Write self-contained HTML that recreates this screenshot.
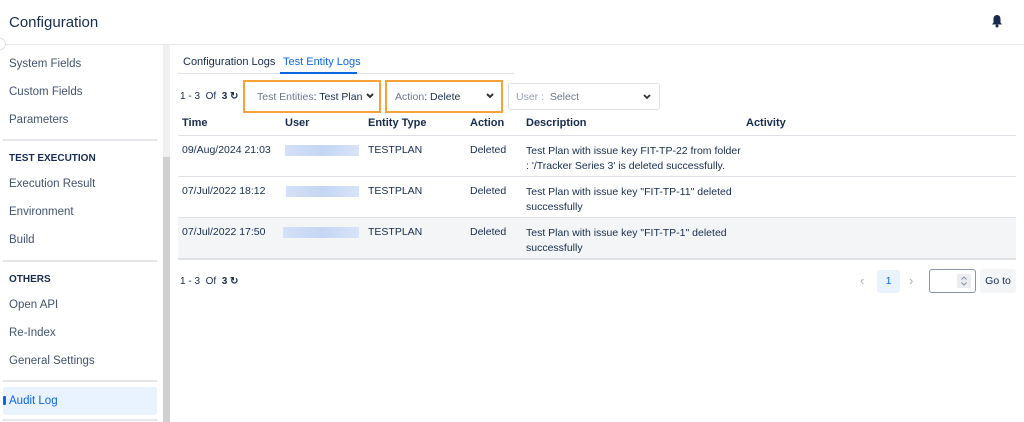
<!DOCTYPE html>
<html><head><meta charset="utf-8"><style>
*{box-sizing:border-box;margin:0;padding:0}
body{width:1024px;height:422px;overflow:hidden;background:#fff;font-family:"Liberation Sans",sans-serif;color:#172b4d;position:relative;font-size:11px}
.a{position:absolute;white-space:nowrap}
.nav{color:#42526e;font-size:11.5px;left:9px}
.sec{font-weight:bold;font-size:10px;left:9px;color:#172b4d}
.hr{position:absolute;left:3px;width:154px;height:2px;background:#e4e6ea}
.th{font-weight:bold;font-size:11px;top:117px}
.td{font-size:10.5px;color:#172b4d}
.blur{position:absolute;height:11px;background:linear-gradient(90deg,#d4e0f7,#c4d6f4,#d8e3f8)}
.line{position:absolute;left:178px;width:838px;height:1px;background:#dfe1e6}
.sel{position:absolute;top:83px;height:27px;border:1px solid #dfe1e6;border-radius:3px;background:#fff}
.or{position:absolute;border:2px solid #f6a13a}
.chev{position:absolute}
</style></head><body>
<div class="a" style="left:9px;top:14px;font-size:15px;color:#172b4d">Configuration</div>
<svg class="a" style="left:991px;top:14px" width="12" height="14" viewBox="0 0 12 14"><path d="M6 1C3.8 1 2.5 2.8 2.5 5v3.5L1 10.5h10L9.5 8.5V5C9.5 2.8 8.2 1 6 1z" fill="#172b4d"/><circle cx="6" cy="12" r="1.5" fill="#172b4d"/></svg>
<div class="a" style="left:0;top:44px;width:1024px;height:1px;background:#e4e6ea"></div>
<div class="a" style="left:-6px;top:38px;width:12px;height:12px;border-radius:50%;background:#fff;border:1px solid #dfe1e6"></div>
<div class="a" style="left:163px;top:45px;width:7px;height:377px;background:#f0f0f0"></div>
<div class="a" style="left:163px;top:157px;width:7px;height:265px;background:#d0d0d0"></div>
<div class="a nav" style="top:58px">System Fields</div>
<div class="a nav" style="top:86px">Custom Fields</div>
<div class="a nav" style="top:114px">Parameters</div>
<div class="hr" style="top:139px"></div>
<div class="a sec" style="top:153px">TEST EXECUTION</div>
<div class="a nav" style="top:178px">Execution Result</div>
<div class="a nav" style="top:206px">Environment</div>
<div class="a nav" style="top:234px">Build</div>
<div class="hr" style="top:260px"></div>
<div class="a sec" style="top:274px">OTHERS</div>
<div class="a nav" style="top:299px">Open API</div>
<div class="a nav" style="top:327px">Re-Index</div>
<div class="a nav" style="top:355px">General Settings</div>
<div class="hr" style="top:380px"></div>
<div class="a" style="left:3px;top:387px;width:154px;height:28px;background:#e9f2ff;border-radius:3px"></div>
<div class="a" style="left:3px;top:396px;width:3px;height:9px;background:#0c66e4;border-radius:1px"></div>
<div class="a nav" style="top:395px;color:#0c66e4">Audit Log</div>
<div class="hr" style="top:419px"></div>
<div class="a" style="left:183px;top:56px;font-size:11px;color:#172b4d">Configuration Logs</div>
<div class="a" style="left:283px;top:56px;font-size:11px;color:#0c66e4">Test Entity Logs</div>
<div class="a" style="left:178px;top:73px;width:336px;height:1px;background:#dfe1e6"></div>
<div class="a" style="left:280px;top:72px;width:77px;height:2px;background:#0c66e4"></div>
<div class="a" style="left:180px;top:91px;font-size:10px">1 - 3 &nbsp;Of &nbsp;<b>3</b> <b>&#x21BB;</b></div>
<div class="or" style="left:243px;top:80px;width:138px;height:33px"></div>
<div class="a" style="left:257px;top:91px;font-size:10.5px;color:#6b778c">Test Entities<span style="color:#172b4d">: Test Plan</span></div>
<svg class="chev" style="left:366px;top:93px" width="8" height="6" viewBox="0 0 8 6"><path d="M1 1l3 3 3-3" stroke="#333" stroke-width="2" fill="none"/></svg>
<div class="or" style="left:385px;top:80px;width:118px;height:33px"></div>
<div class="a" style="left:395px;top:91px;font-size:10.5px;color:#6b778c">Action<span style="color:#172b4d">: Delete</span></div>
<svg class="chev" style="left:486px;top:93px" width="8" height="6" viewBox="0 0 8 6"><path d="M1 1l3 3 3-3" stroke="#333" stroke-width="2" fill="none"/></svg>
<div class="sel" style="left:508px;top:83px;width:152px;height:27px"></div>
<div class="a" style="left:516px;top:91px;font-size:10.5px;color:#97a0af">User : &nbsp;<span style="color:#6b778c">Select</span></div>
<svg class="chev" style="left:643px;top:94px" width="8" height="6" viewBox="0 0 8 6"><path d="M1 1l3 3 3-3" stroke="#333" stroke-width="1.8" fill="none"/></svg>
<div class="a th" style="left:182px">Time</div>
<div class="a th" style="left:285px">User</div>
<div class="a th" style="left:368px">Entity Type</div>
<div class="a th" style="left:470px">Action</div>
<div class="a th" style="left:526px">Description</div>
<div class="a th" style="left:746px">Activity</div>
<div class="line" style="top:135px"></div>
<div class="line" style="top:176px"></div>
<div class="a" style="left:178px;top:217px;width:838px;height:41px;background:#f4f5f7"></div>
<div class="line" style="top:217px"></div>
<div class="line" style="top:258px;height:2px"></div>
<div class="a td" style="left:182px;top:144px">09/Aug/2024 21:03</div>
<div class="blur" style="left:285px;top:145px;width:74px"></div>
<div class="a td" style="left:368px;top:144px">TESTPLAN</div>
<div class="a td" style="left:470px;top:144px">Deleted</div>
<div class="a td" style="left:526px;top:144px;line-height:15px">Test Plan with issue key FIT-TP-22 from folder<br>: '/Tracker Series 3' is deleted successfully.</div>
<div class="a td" style="left:182px;top:185px">07/Jul/2022 18:12</div>
<div class="blur" style="left:286px;top:186px;width:73px"></div>
<div class="a td" style="left:368px;top:185px">TESTPLAN</div>
<div class="a td" style="left:470px;top:185px">Deleted</div>
<div class="a td" style="left:526px;top:185px;line-height:15px">Test Plan with issue key "FIT-TP-11" deleted<br>successfully</div>
<div class="a td" style="left:182px;top:226px">07/Jul/2022 17:50</div>
<div class="blur" style="left:283px;top:227px;width:76px"></div>
<div class="a td" style="left:368px;top:226px">TESTPLAN</div>
<div class="a td" style="left:470px;top:226px">Deleted</div>
<div class="a td" style="left:526px;top:226px;line-height:15px">Test Plan with issue key "FIT-TP-1" deleted<br>successfully</div>
<div class="a" style="left:180px;top:276px;font-size:10px">1 - 3 &nbsp;Of &nbsp;<b>3</b> <b>&#x21BB;</b></div>
<div class="a" style="left:860px;top:273px;color:#a5adba;font-size:13px">&#8249;</div>
<div class="a" style="left:877px;top:270px;width:23px;height:23px;background:#e9f2ff;border-radius:3px;color:#0c66e4;font-size:10.5px;text-align:center;line-height:23px">1</div>
<div class="a" style="left:909px;top:273px;color:#a5adba;font-size:13px">&#8250;</div>
<div class="a" style="left:929px;top:269px;width:47px;height:24px;border:1px solid #8993a4;border-radius:3px"></div>
<div class="a" style="left:957px;top:274px;width:14px;height:14px;background:#ebecf0;border-radius:2px"></div>
<svg class="a" style="left:960px;top:276px" width="8" height="10" viewBox="0 0 8 10"><path d="M1.5 3.5L4 1l2.5 2.5M1.5 6.5L4 9l2.5-2.5" stroke="#8993a4" stroke-width="1" fill="none"/></svg>
<div class="a" style="left:980px;top:269px;width:36px;height:24px;background:#f4f5f7;border-radius:3px;font-size:10.5px;text-align:center;line-height:24px">Go to</div>
</body></html>
